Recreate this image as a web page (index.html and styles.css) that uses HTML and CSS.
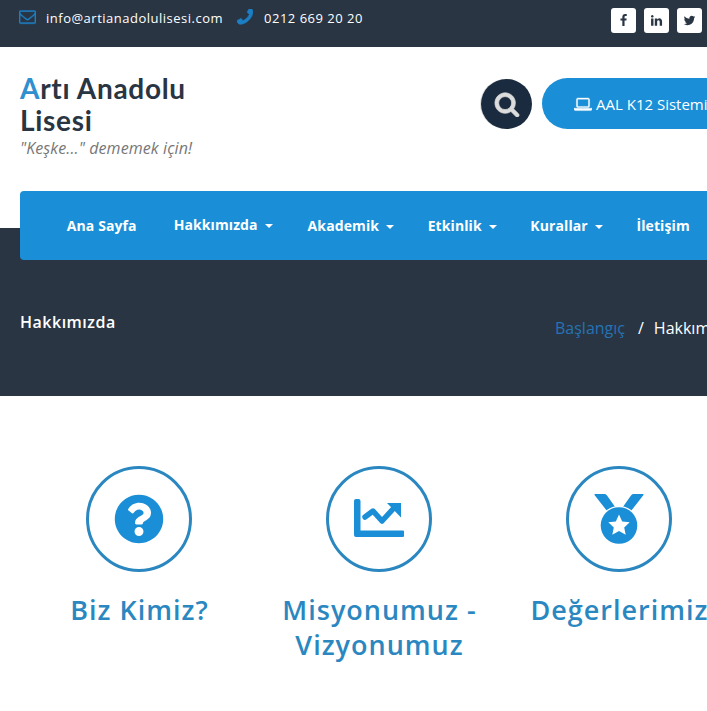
FILE: index.html
```html
<!DOCTYPE html>
<html lang="tr">
<head>
<meta charset="utf-8">
<title>Artı Anadolu Lisesi</title>
<link rel="stylesheet" href="styles.css">
</head>
<body>
<div class="page">
  <div class="topbar">
    <div class="contact">
      <svg class="ic-mail" viewBox="0 0 1792 1792"><path d="M1664 1504v-768q-32 36-69 66-268 206-426 338-51 43-83 67t-86.500 48.500-102.500 24.500h-2q-48 0-102.500-24.500t-86.500-48.500-83-67q-158-132-426-338-37-30-69-66v768q0 13 9.500 22.500t22.500 9.500h1472q13 0 22.500-9.500t9.500-22.500zm0-1051v-24.500l-.5-13-3-12.500-5.500-9-9-7.500-14-2.500h-1472q-13 0-22.500 9.500t-9.500 22.500q0 168 147 284 193 152 401 317 6 5 35 29.500t46 37.500 44.500 31.500 50.500 27.500 43 9h2q20 0 43-9t50.500-27.500 44.500-31.500 46-37.500 35-29.500q208-165 401-317 54-43 100.500-115.500t46.500-131.500zm128-37v1088q0 66-47 113t-113 47h-1472q-66 0-113-47t-47-113v-1088q0-66 47-113t113-47h1472q66 0 113 47t47 113z"/></svg>
      <span class="mail-text">info@artianadolulisesi.com</span>
      <svg class="ic-phone" viewBox="192 192 1408 1408"><g transform="matrix(-1 0 0 1 1792 0)"><path d="M1600 1240q0 27-10 70.500t-21 68.500q-21 50-122 106-94 51-186 51-27 0-53-3.500t-57.500-12.500-47-14.500-55.500-20.500-49-18q-98-35-175-83-127-79-264-216t-216-264q-48-77-83-175-3-9-18-49t-20.500-55.500-14.500-47-12.500-57.500-3.500-53q0-92 51-186 56-101 106-122 25-11 68.500-21t70.500-10q14 0 21 3 18 6 53 76 11 19 30 54t35 63.500 31 53.500q3 4 17.500 25t21.500 35.500 7 28.500q0 20-28.500 50t-62 55-62 53-28.500 46q0 9 5 22.500t8.500 20.500 14 24 11.500 19q76 137 174 235t235 174q2 1 19 11.500t24 14 20.500 8.500 22.500 5q18 0 46-28.500t53-62 55-62 50-28.500q14 0 28.500 7t35.500 21.500 25 17.500q25 15 53.500 31t63.500 35 54 30q70 35 76 53 3 7 3 21z"/></g></svg>
      <span class="phone-text">0212 669 20 20</span>
    </div>
    <div class="socials">
      <a class="social"><svg viewBox="0 0 1792 1792"><path d="M1343 12v264h-157q-86 0-116 36t-30 108v189h293l-39 296h-254v759h-306v-759h-255v-296h255v-218q0-186 104-288.500t277-102.500q147 0 228 12z"/></svg></a>
      <a class="social"><svg viewBox="0 0 1792 1792"><path d="M477 625v991h-330v-991h330zm21-306q1 73-50.500 122t-135.500 49h-2q-82 0-132-49t-50-122q0-74 51.500-122.500t134.500-48.500 133 48.500 51 122.500zm1166 729v568h-329v-530q0-105-40.500-164.500t-126.500-59.500q-63 0-105.500 34.500t-63.500 85.500q-11 30-11 81v553h-329q2-399 2-647t-1-296l-1-48h329v144h-2q20-32 41-56t56.500-52 87-43.500 114.500-15.500q171 0 275 113.500t104 332.500z"/></svg></a>
      <a class="social"><svg viewBox="0 0 1792 1792"><path d="M1684 408q-67 98-162 167 1 14 1 42 0 130-38 259.500t-115.500 248.500-184.500 210.500-258 146-323 54.500q-271 0-496-145 35 4 78 4 225 0 401-138-105-2-188-64.500t-114-159.500q33 5 61 5 43 0 85-11-112-23-185.500-111.500t-73.500-205.500v-4q68 38 146 41-66-44-105-115t-39-154q0-88 44-163 121 149 294.500 238.500t371.500 99.500q-8-38-8-74 0-134 94.500-228.500t228.500-94.500q140 0 236 102 109-21 205-78-37 115-142 181 90-10 187-52z"/></svg></a>
    </div>
  </div>

  <header class="header">
    <div class="brand">
      <div class="logo"><span class="logo-a">A</span>rtı Anadolu<br>Lisesi</div>
      <div class="tagline">"Keşke..." dememek için!</div>
    </div>
    <div class="actions">
      <div class="search"><svg viewBox="0 0 1792 1792"><path d="M1216 832q0-185-131.500-316.500t-316.500-131.500-316.500 131.500-131.500 316.500 131.500 316.500 316.500 131.500 316.500-131.500 131.500-316.500zm512 832q0 52-38 90t-90 38q-54 0-90-38l-343-342q-179 124-399 124-143 0-273.500-55.500t-225-150-150-225-55.500-273.500 55.500-273.500 150-225 225-150 273.500-55.500 273.500 55.500 225 150 150 225 55.500 273.500q0 220-124 399l343 343q37 37 37 90z"/></svg></div>
      <a class="k12"><svg viewBox="0 0 1920 1792"><path d="M416 1280q-66 0-113-47t-47-113v-704q0-66 47-113t113-47h1088q66 0 113 47t47 113v704q0 66-47 113t-113 47h-1088zm-32-864v704q0 13 9.500 22.500t22.500 9.500h1088q13 0 22.500-9.500t9.500-22.500v-704q0-13-9.500-22.500t-22.500-9.500h-1088q-13 0-22.500 9.500t-9.500 22.500zm1376 928h160v96q0 66-47 113t-113 47h-1600q-66 0-113-47t-47-113v-96h1760zm-720 96q16 0 16-16t-16-16h-160q-16 0-16 16t16 16h160z"/></svg>AAL K12 Sistemi</a>
    </div>
  </header>

  <nav class="nav">
    <a class="nav-item first">Ana Sayfa</a>
    <a class="nav-item raised">Hakkımızda<i class="caret"></i></a>
    <a class="nav-item">Akademik<i class="caret"></i></a>
    <a class="nav-item">Etkinlik<i class="caret"></i></a>
    <a class="nav-item">Kurallar<i class="caret"></i></a>
    <a class="nav-item">İletişim</a>
  </nav>

  <section class="banner">
    <h1 class="banner-title">Hakkımızda</h1>
    <div class="crumbs"><a class="crumb-link">Başlangıç</a><span class="crumb-sep">/</span><span class="crumb-now">Hakkımızda</span></div>
  </section>

  <section class="features">
    <div class="feature">
      <div class="ring"><svg class="ic-q" viewBox="0 0 512 512"><path d="M504 256c0 136.997-111.043 248-248 248S8 392.997 8 256C8 119.083 119.043 8 256 8s248 111.083 248 248zM262.655 90c-54.497 0-89.255 22.957-116.549 63.758-3.536 5.286-2.353 12.415 2.715 16.258l34.699 26.31c5.205 3.947 12.621 3.008 16.665-2.122 17.864-22.658 30.113-35.797 57.303-35.797 20.429 0 45.698 13.148 45.698 32.958 0 14.976-12.363 22.667-32.534 33.976C247.128 238.528 216 254.941 216 296v4c0 6.627 5.373 12 12 12h56c6.627 0 12-5.373 12-12v-1.333c0-28.462 83.186-29.647 83.186-106.667 0-58.002-60.165-102-116.531-102zM256 338c-25.365 0-46 20.635-46 46 0 25.364 20.635 46 46 46s46-20.636 46-46c0-25.365-20.635-46-46-46z"/></svg></div>
      <h2 class="feature-title">Biz Kimiz?</h2>
    </div>
    <div class="feature">
      <div class="ring"><svg class="ic-chart" viewBox="0 0 50 40"><path d="M2 0h2.500a2 2 0 0 1 2 2v29.500H49a1 1 0 0 1 1 1v4.500a1 1 0 0 1-1 1H2a2 2 0 0 1-2-2V2a2 2 0 0 1 2-2z"/><path class="zig" d="M11 18l8-6 9 10 12-13"/><path d="M33 4h14v14.500z"/></svg></div>
      <h2 class="feature-title">Misyonumuz -<br>Vizyonumuz</h2>
    </div>
    <div class="feature">
      <div class="ring"><svg class="ic-medal" viewBox="39 38 52 54"><path d="M41 40h10q1 0 2 1.500l8.500 12-7 4q-.8.400-1.400-.4L40.500 41q-.5-1 .5-1zM89 40H79q-1 0-2 1.500L68.500 53.500l7 4q.8.400 1.400-.4L89.500 41q.5-1-.5-1z"/><circle class="disc" cx="65" cy="71.500" r="18.300"/><path class="star" d="M65 60.500l3.200 6.900 7.500.9-5.500 5.100 1.500 7.400-6.700-3.700-6.700 3.700 1.500-7.400-5.500-5.100 7.500-.9z"/></svg></div>
      <h2 class="feature-title">Değerlerimiz</h2>
    </div>
  </section>
</div>
</body>
</html>
```
FILE: styles.css
```css
* { box-sizing: border-box; }
html, body { margin: 0; padding: 0; height: 711px; overflow: hidden; background: #fff; }
body { font-family: "Open Sans", "Liberation Sans", sans-serif; color: #fff; }
.page { width: 707px; height: 711px; overflow: hidden; }

.topbar { height: 47px; background: #2a3544; display: flex; justify-content: space-between; padding: 8px 5px 0 19px; }
.contact { display: flex; align-items: flex-start; height: 20px; }
.ic-mail { width: 17px; height: 17px; fill: #1c7fc4; stroke: #1c7fc4; stroke-width: 40; }
.ic-phone { width: 16px; height: 16px; fill: #1c7fc4; stroke: #1c7fc4; stroke-width: 60; margin: 1px 0 0 14px; }
.mail-text { margin-left: 10px; font-size: 13px; line-height: 20px; letter-spacing: .5px; }
.phone-text { margin-left: 11px; font-size: 13px; line-height: 20px; letter-spacing: .5px; }
.socials { display: flex; gap: 8px; }
.social { width: 25px; height: 25px; background: #fff; border-radius: 3px; display: flex; align-items: center; justify-content: center; }
.social svg { width: 13px; height: 13px; fill: #2a3544; }

.header { height: 144px; display: flex; padding: 25px 0 0 20px; }
.brand { width: 461px; flex: none; }
.logo { font-family: "Lato", sans-serif; font-weight: 700; font-size: 28px; line-height: 32px; letter-spacing: .7px; color: #2a3544; }
.logo-a { color: #2f8fcf; }
.tagline { font-style: italic; font-size: 16px; line-height: 20px; letter-spacing: .1px; color: #777; margin-top: 2px; }
.actions { display: flex; align-items: flex-start; gap: 10px; padding-top: 6px; flex: none; }
.search { width: 51px; height: 50px; margin-top: 1px; border-radius: 50%; background: #1a2a3f; box-shadow: -1px 0 0 #ddd; display: flex; align-items: center; justify-content: center; }
.search svg { width: 26px; height: 26px; fill: #dcdcdc; stroke: #dcdcdc; stroke-width: 50; }
.k12 { width: 220px; height: 51px; border-radius: 26px; background: #1a8ed6; display: flex; align-items: center; padding-left: 32px; font-size: 15px; color: #fff; white-space: nowrap; }
.k12 svg { width: 18px; height: 18px; fill: #fff; stroke: #fff; stroke-width: 40; margin-right: 4px; }

.nav { position: relative; margin: 0 0 -32px 20px; width: 720px; height: 69px; border-radius: 4px; background: #1a8ed6; display: flex; align-items: center; padding-left: 30px; font-weight: 700; font-size: 14px; letter-spacing: .1px; }
.nav-item { padding: 0 16.8px; white-space: nowrap; }
.first { margin-right: 3.4px; }
.raised { margin: -3px 1.4px 0 0; }
.caret { display: inline-block; margin-left: 7px; vertical-align: middle; border-top: 4px solid #fff; border-left: 4px solid transparent; border-right: 4px solid transparent; }

.banner { height: 168px; background: #2a3544; display: flex; padding: 83px 0 0 20px; }
.banner-title { margin: 0; width: 535px; flex: none; font-size: 16px; line-height: 22px; font-weight: 600; letter-spacing: .5px; }
.crumbs { flex: none; display: flex; font-size: 16px; line-height: 22px; padding-top: 6px; white-space: nowrap; }
.crumb-link { color: #2473b3; }
.crumb-sep { margin: 0 10px 0 13px; }

.features { display: flex; padding: 70px 0 0 19px; width: 760px; }
.feature { width: 240px; flex: none; display: flex; flex-direction: column; align-items: center; }
.ring { width: 106px; height: 106px; border: 3px solid #2b87c0; border-radius: 50%; display: flex; align-items: center; justify-content: center; }
.ic-q { width: 50px; height: 50px; fill: #1a8ed6; }
.ic-chart { width: 50px; height: 40px; fill: #1a8ed6; }
.zig { fill: none; stroke: #1a8ed6; stroke-width: 5.5; stroke-linecap: round; stroke-linejoin: round; }
.ic-medal { width: 52px; height: 54px; fill: #1a8ed6; }
.disc { stroke: #fff; stroke-width: 2.5; paint-order: stroke; }
.star { fill: #fff; }
.feature-title { margin: 20px 0 0; padding-left: 1px; font-size: 27px; line-height: 35px; font-weight: 600; letter-spacing: 1px; color: #2b87c0; text-align: center; white-space: nowrap; }
```
